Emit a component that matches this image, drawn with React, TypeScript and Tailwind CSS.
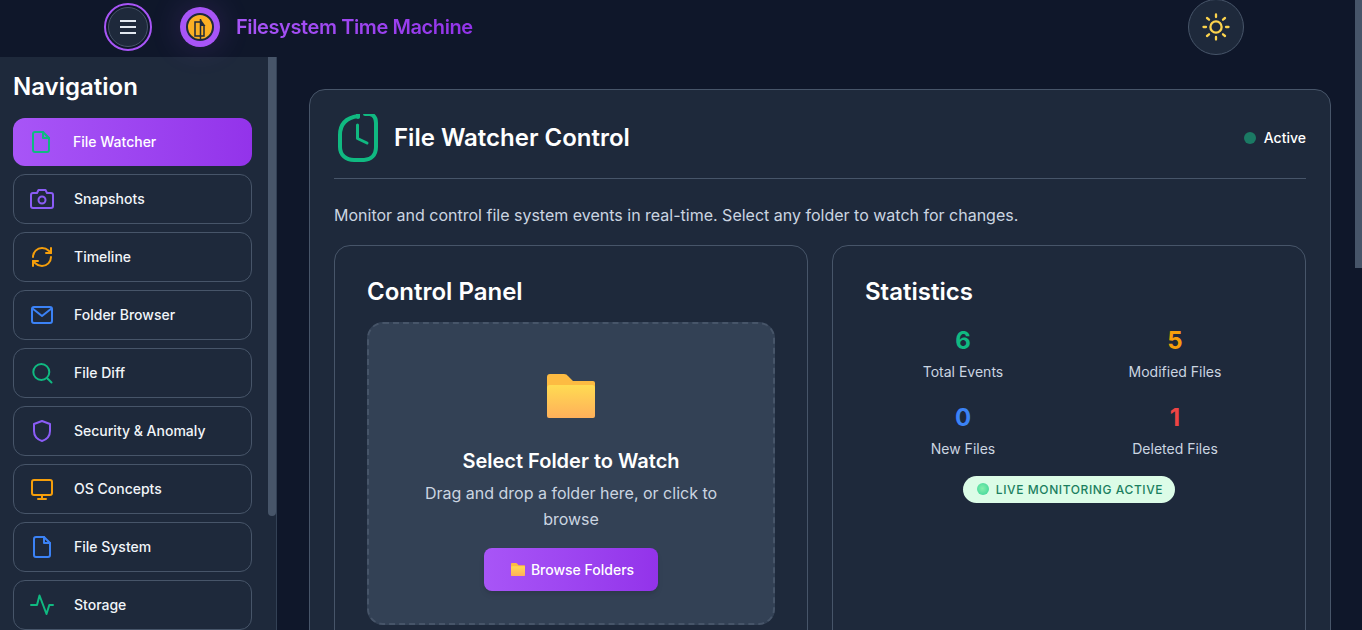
import type { ReactNode } from 'react';

function Icon({ className, children }: { className: string; children: ReactNode }) {
    return (
        <svg
            viewBox="0 0 24 24"
            fill="none"
            stroke="currentColor"
            strokeWidth="2"
            strokeLinecap="round"
            strokeLinejoin="round"
            className={`h-6 w-6 shrink-0 ${className}`}
        >
            {children}
        </svg>
    );
}

const fileIcon = (
    <>
        <path d="M6 2h8l6 6v12a2 2 0 0 1-2 2H6a2 2 0 0 1-2-2V4a2 2 0 0 1 2-2z" />
        <path d="M14 2v6h6" />
    </>
);

const navItems = [
    {
        label: 'Snapshots',
        color: 'text-[#8b5cf6]',
        icon: (
            <>
                <path d="M3 6h4l1.500-3h7L17 6h4a2 2 0 0 1 2 2v11a2 2 0 0 1-2 2H3a2 2 0 0 1-2-2V8a2 2 0 0 1 2-2z" />
                <circle cx="12" cy="13" r="3.500" />
            </>
        ),
    },
    {
        label: 'Timeline',
        color: 'text-[#f59e0b]',
        icon: (
            <>
                <path d="M3 12a9 9 0 0 1 9-9 9.750 9.750 0 0 1 6.740 2.740L21 8" />
                <path d="M21 3v5h-5" />
                <path d="M21 12a9 9 0 0 1-9 9 9.750 9.750 0 0 1-6.740-2.740L3 16" />
                <path d="M8 16H3v5" />
            </>
        ),
    },
    {
        label: 'Folder Browser',
        color: 'text-[#3b82f6]',
        icon: (
            <>
                <rect x="2" y="4" width="20" height="16" rx="2" />
                <path d="M2.500 5.500L12 13l9.500-7.500" />
            </>
        ),
    },
    {
        label: 'File Diff',
        color: 'text-[#10b981]',
        icon: (
            <>
                <circle cx="11.300" cy="11" r="8" />
                <path d="M17.500 17.500l4 4" />
            </>
        ),
    },
    {
        label: 'Security & Anomaly',
        color: 'text-[#8b5cf6]',
        icon: <path d="M12 2l8 3v7c0 5-3.500 8.500-8 10-4.500-1.500-8-5-8-10V5z" />,
    },
    {
        label: 'OS Concepts',
        color: 'text-[#f59e0b]',
        icon: (
            <>
                <rect x="2" y="3" width="20" height="15" rx="2" />
                <path d="M12 18v4M8 22h8" />
            </>
        ),
    },
    { label: 'File System', color: 'text-[#3b82f6]', icon: fileIcon },
    {
        label: 'Storage',
        color: 'text-[#10b981]',
        icon: <path d="M1 12h6l2.500-9.500L16.500 21l2.800-9H23" />,
    },
];

const stats = [
    { value: '6', label: 'Total Events', color: 'text-[#10b981]' },
    { value: '5', label: 'Modified Files', color: 'text-[#f59e0b]' },
    { value: '0', label: 'New Files', color: 'text-[#3b82f6]' },
    { value: '1', label: 'Deleted Files', color: 'text-[#ef4444]' },
];

function FolderEmoji({ className, id }: { className: string; id: string }) {
    return (
        <svg viewBox="0 0 48 44" className={className}>
            <defs>
                <linearGradient id={id} x1="0" y1="0" x2="0" y2="1">
                    <stop offset="0" stopColor="#ffdb52" />
                    <stop offset="1" stopColor="#ffb05a" />
                </linearGradient>
            </defs>
            <path
                d="M0 3a3 3 0 0 1 3-3h14c2 0 3 .800 4.500 2.500L26 7h20a2 2 0 0 1 2 2v6H0z"
                fill="#fdbb42"
            />
            <path
                d="M0 14a3 3 0 0 1 3-3h42a3 3 0 0 1 3 3v28a2 2 0 0 1-2 2H2a2 2 0 0 1-2-2z"
                fill={`url(#${id})`}
            />
        </svg>
    );
}

export default function App() {
    return (
        <div className="flex h-screen overflow-hidden bg-[#0f172a] [font-family:Inter,sans-serif] leading-[1.6] text-white">
            <div className="flex min-w-0 flex-1 flex-col">
                <header className="relative z-10 flex h-[57px] shrink-0 items-center pb-[3px] pl-[104px] pr-[111px]">
                    <button className="flex h-12 w-12 items-center justify-center rounded-full border-2 border-[#a855f7]">
                        <span className="flex h-10 w-10 flex-col items-center justify-center gap-1 rounded-full border border-[#475569] bg-[#1e293b]">
                            <span className="h-0.5 w-4 bg-[#e2e8f0]" />
                            <span className="h-0.5 w-4 bg-[#e2e8f0]" />
                            <span className="h-0.5 w-4 bg-[#e2e8f0]" />
                        </span>
                    </button>
                    <div className="ml-7 flex h-10 w-10 items-center justify-center rounded-full bg-[#a855f7] shadow-[0_0_32px_rgba(168,85,247,0.2)]">
                        <svg viewBox="0 0 28 28" fill="none" className="h-7 w-7">
                            <circle cx="14" cy="14" r="13" fill="#fbb024" stroke="#1e293b" strokeWidth="2" />
                            <path d="M16 9H9v14h9V13" stroke="#1e293b" strokeWidth="1.500" />
                            <path d="M14.500 6v21" stroke="#1e293b" strokeWidth="1.500" />
                            <path d="M14.500 6L19.500 13h-5z" fill="#1e293b" />
                        </svg>
                    </div>
                    <h1 className="ml-4 bg-gradient-to-r from-[#a855f7] to-[#9333ea] bg-clip-text text-xl leading-[1.6] font-semibold tracking-[-0.02em] text-transparent">
                        Filesystem Time Machine
                    </h1>
                    <button className="ml-auto flex h-14 w-14 items-center justify-center rounded-full border border-[#475569] bg-[#1e293b]">
                        <svg
                            viewBox="0 0 28 28"
                            fill="none"
                            stroke="#fcd34d"
                            strokeWidth="2.300"
                            strokeLinecap="round"
                            className="h-7 w-7"
                        >
                            <circle cx="14" cy="14" r="5.600" />
                            <path d="M14 1.500v2.500M14 24v2.500M1.500 14H4M24 14h2.500M5 5l2 1.700M21 21.300l2 1.700M5 23l2-1.700M21 6.700L23 5" />
                        </svg>
                    </button>
                </header>

                <div className="flex min-h-0 flex-1">
                    <aside className="flex w-[277px] shrink-0 border-r border-[#334155] bg-[#1e293b]">
                        <nav className="min-w-0 flex-1 pl-[13px] pr-4 pt-4">
                            <h2 className="mb-4 text-2xl leading-[1.2] font-semibold">Navigation</h2>
                            <div className="flex flex-col gap-2">
                                <a className="flex h-12 items-center gap-5 rounded-xl bg-gradient-to-r from-[#a855f7] to-[#9333ea] px-4 text-sm font-medium">
                                    <Icon className="text-[#10b981]">{fileIcon}</Icon>
                                    File Watcher
                                </a>
                                {navItems.map((item) => (
                                    <a
                                        key={item.label}
                                        className="flex h-[50px] items-center gap-5 rounded-xl border border-[#475569] px-4 text-sm font-medium text-[#f1f5f9]"
                                    >
                                        <Icon className={item.color}>{item.icon}</Icon>
                                        {item.label}
                                    </a>
                                ))}
                            </div>
                        </nav>
                        <div className="w-2 shrink-0">
                            <div className="h-[459px] rounded-b-md bg-[#475569]" />
                        </div>
                    </aside>

                    <main className="min-w-0 flex-1 pl-8 pr-6 pt-8">
                        <section className="rounded-2xl border border-[#475569] bg-[#1e293b] p-6">
                            <div className="mb-6 flex items-center border-b border-[#475569] pb-4">
                                <svg
                                    viewBox="0 0 48 48"
                                    fill="none"
                                    stroke="#10b981"
                                    strokeWidth="4"
                                    strokeLinecap="round"
                                    strokeLinejoin="round"
                                    className="h-12 w-12"
                                >
                                    <path d="M24 2C14 3.500 6 8 6 21v12c0 8 6 13 14 13h10c7 0 12-5 12-13V9c0-5-2-8-6-9h-5" />
                                    <path d="M24 0v3" />
                                    <path d="M23.500 11v13.500L33 29" strokeWidth="3" />
                                </svg>
                                <h2 className="ml-3 text-2xl font-semibold">File Watcher Control</h2>
                                <div className="ml-auto flex items-center gap-2">
                                    <span className="h-3 w-3 rounded-full bg-[#1b7a64]" />
                                    <span className="text-sm font-medium">Active</span>
                                </div>
                            </div>

                            <p className="mb-4 text-[#cbd5e1]">
                                Monitor and control file system events in real-time. Select any folder to watch for changes.
                            </p>

                            <div className="grid grid-cols-2 gap-6">
                                <div className="rounded-2xl border border-[#475569] p-8">
                                    <h3 className="mb-4 text-2xl leading-[1.2] font-semibold">Control Panel</h3>
                                    <div className="flex h-[303px] flex-col items-center rounded-2xl border-2 border-dashed border-[#475569] bg-[#334155] px-8 pt-[50px] text-center">
                                        <FolderEmoji id="folder-big" className="h-11 w-12" />
                                        <h4 className="mt-[27px] text-xl leading-[1.6] font-semibold">Select Folder to Watch</h4>
                                        <p className="mt-1 text-[#cbd5e1]">Drag and drop a folder here, or click to browse</p>
                                        <button className="mt-[15px] flex h-[43px] w-[174px] items-center justify-center gap-1.5 rounded-lg bg-gradient-to-r from-[#a855f7] to-[#9333ea] pl-[3px] pt-px text-sm font-medium shadow-md">
                                            <FolderEmoji id="folder-small" className="h-[13px] w-[14px]" />
                                            Browse Folders
                                        </button>
                                    </div>
                                </div>

                                <div className="rounded-2xl border border-[#475569] p-8">
                                    <h3 className="mb-4 text-2xl leading-[1.2] font-semibold">Statistics</h3>
                                    <div className="grid grid-cols-2 gap-4">
                                        {stats.map((stat) => (
                                            <div key={stat.label} className="text-center">
                                                <div className={`text-2xl leading-[1.6] font-bold ${stat.color}`}>{stat.value}</div>
                                                <div className="text-sm leading-[1.6] text-[#cbd5e1]">{stat.label}</div>
                                            </div>
                                        ))}
                                    </div>
                                    <div className="mt-4 flex justify-center">
                                        <div className="flex h-[27px] items-center gap-[7px] rounded-full bg-[#dcfce7] pl-3.5 pr-3 pt-px text-xs font-medium tracking-[0.05em] text-[#1b7f5f]">
                                            <span className="-mt-px h-3 w-3 rounded-full bg-[radial-gradient(circle_at_45%_45%,#86efac,#34d399)]" />
                                            LIVE MONITORING ACTIVE
                                        </div>
                                    </div>
                                </div>
                            </div>
                        </section>
                    </main>
                </div>
            </div>

            <div className="w-[7px] shrink-0">
                <div className="h-[268px] bg-[#475569]" />
            </div>
        </div>
    );
}
